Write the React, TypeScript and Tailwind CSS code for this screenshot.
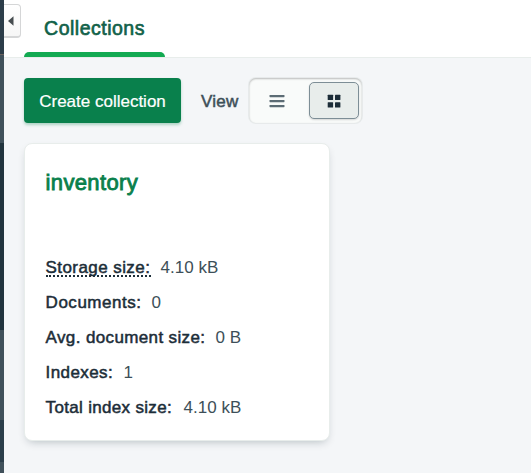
const stats = [
  { label: 'Storage size:', value: '4.10 kB', tracking: 'tracking-[0.42px]', width: 'w-[105px]', hint: true },
  { label: 'Documents:', value: '0', tracking: 'tracking-[0.52px]', width: 'w-[96px]' },
  { label: 'Avg. document size:', value: '0 B', tracking: 'tracking-[0.37px]', width: 'w-[160px]' },
  { label: 'Indexes:', value: '1', tracking: 'tracking-[0.4px]', width: 'w-[68px]' },
  { label: 'Total index size:', value: '4.10 kB', tracking: 'tracking-[0.32px]', width: 'w-[128px]' },
];

function Sidebar() {
  return (
    <aside className="flex w-1 shrink-0 flex-col">
      <div className="h-[54px] bg-[#2c3d49]" />
      <div className="h-px bg-[#6d625e]" />
      <div className="h-[88px] bg-[#40515b]" />
      <div className="h-[187px] bg-[#21343e]" />
      <div className="h-[90px] bg-[#40515b]" />
      <div className="h-[42px] bg-[#2b3e4a]" />
      <div className="grow bg-[#40515b]" />
    </aside>
  );
}

function ListIcon() {
  return (
    <svg width="16" height="14" viewBox="0 0 16 14" fill="#5c6c75">
      <rect x="0.5" y="1" width="15" height="2.2" rx="0.6" />
      <rect x="0.5" y="6" width="15" height="2.2" rx="0.6" />
      <rect x="0.5" y="11" width="15" height="2.2" rx="0.6" />
    </svg>
  );
}

function GridIcon() {
  return (
    <svg width="14" height="14" viewBox="0 0 14 14" fill="#1c2d38">
      <rect x="0.7" y="0.7" width="5.4" height="5.4" rx="0.5" />
      <rect x="8" y="0.7" width="5.4" height="5.4" rx="0.5" />
      <rect x="0.7" y="8.2" width="5.4" height="5.4" rx="0.5" />
      <rect x="8" y="8.2" width="5.4" height="5.4" rx="0.5" />
    </svg>
  );
}

export default function App() {
  return (
    <div className="flex h-[473px] w-[531px] overflow-hidden bg-[#f4f6f8] font-['Liberation_Sans',Arial,sans-serif] text-[17px] text-[#1c2d38]">
      <Sidebar />
      <main className="min-w-0 grow">
        <header className="flex h-[58px] items-start border-b border-[#e8edeb] bg-white">
          <button className="mt-1 flex h-[34px] w-[17px] items-center rounded-r-[4px] border border-b-2 border-l-0 border-[#d5d6d7] bg-linear-to-b from-white to-[#f6f6f6] pl-[4px]">
            <svg width="6" height="10" viewBox="0 0 6 10" fill="#464c4f">
              <path d="M5.5 0.3V9.7L0 5Z" />
            </svg>
          </button>
          <div className="ml-[3px] flex h-[57px] w-[141px] flex-col items-center">
            <div className="flex h-[52px] items-center pt-[6px] text-[19.5px] tracking-[0.5px] text-[#116149] [-webkit-text-stroke:0.65px_#116149]">
              Collections
            </div>
            <div className="h-[5px] w-full rounded-t-[5px] bg-[#13aa52]" />
          </div>
        </header>
        <section className="px-5 pt-5">
          <div className="flex items-center">
            <button className="h-[45px] w-[157px] rounded-[4px] bg-[#09804c] pt-[2px] text-center text-white shadow-[0_2px_3px_rgba(9,128,76,0.3)] [-webkit-text-stroke:0.2px_white]">
              Create collection
            </button>
            <span className="ml-5 w-12 pt-[2px] tracking-[0.25px] text-[#3d4f58] [-webkit-text-stroke:0.5px_#3d4f58]">View</span>
            <div className="flex h-[45px] w-[113px] items-center rounded-[7px] bg-[#f9fbfa] p-[3px] shadow-[inset_0_1px_2px_rgba(0,0,0,0.25),0_0_0_1px_rgba(225,230,229,0.7)]">
              <button className="flex h-[37px] w-[50px] items-center justify-center">
                <ListIcon />
              </button>
              <button className="ml-[7px] flex h-[37px] w-[50px] items-center justify-center rounded-[5px] border border-[#7d8e96] bg-[#e8edeb] shadow-[0_1px_2px_rgba(0,0,0,0.15)]">
                <GridIcon />
              </button>
            </div>
          </div>
          <article className="mt-5 h-[298px] w-[306px] rounded-[8px] border border-[#e8edeb] bg-white pl-[20.6px] pr-5 pt-[25px] shadow-[0_4px_10px_-4px_rgba(0,30,43,0.3)]">
            <h2 className="text-[22px] leading-[28px] tracking-[0.35px] text-[#09804c] [-webkit-text-stroke:0.85px_#09804c]">
              inventory
            </h2>
            <dl className="mt-[53px]">
              {stats.map(({ label, value, tracking, width, hint }) => (
                <div key={label} className="flex h-[35px] items-center">
                  <dt className={`${width} ${tracking} h-[18px] whitespace-nowrap leading-[18px] [-webkit-text-stroke:0.5px_#1c2d38] ${hint ? 'border-b-2 border-dotted border-[#1c2d38]' : ''}`}>
                    {label}
                  </dt>
                  <dd className="ml-[10px] whitespace-nowrap leading-[18px] text-[#3d4f58]">{value}</dd>
                </div>
              ))}
            </dl>
          </article>
        </section>
      </main>
    </div>
  );
}
